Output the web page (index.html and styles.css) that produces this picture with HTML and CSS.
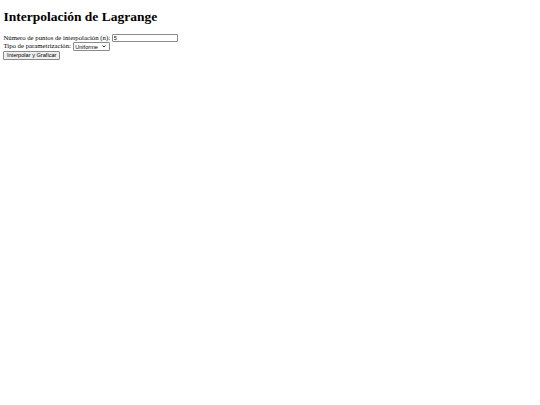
FILE: index.html
```html
<!DOCTYPE html>
<html lang="es">
<head>
<meta charset="utf-8">
<title>Interpolación de Lagrange</title>
<link rel="stylesheet" href="styles.css">
</head>
<body class="page">
<h1 class="title">Interpolación de Lagrange</h1>
<form class="form">
<label class="label" for="n">Número de puntos de interpolación (n):</label>
<input class="input" type="text" id="n" value="5">
<br>
<label class="label" for="tipo">Tipo de parametrización:</label>
<span class="select-wrap"><select class="select" id="tipo">
<option>Uniforme</option>
<option>Chebyshev</option>
</select><svg class="chevron" viewBox="0 0 8 5" width="4" height="2.5" aria-hidden="true"><path d="M1 1 L4 4 L7 1" fill="none" stroke="#000" stroke-width="1.6"/></svg></span>
<br>
<button class="button" type="button">Interpolar y Graficar</button>
</form>
</body>
</html>
```
FILE: styles.css
```css
html {
  background: #fff;
}
.page {
  margin: 3.4px;
  font-family: "Liberation Serif", "Times New Roman", serif;
  font-size: 6.75px;
  color: #000;
}
.title {
  font-size: 13.5px;
  font-weight: bold;
  margin: 5.6px 0 9px;
}
.form {
  margin: 0;
}
.input, .select, .button {
  font-family: "Liberation Sans", Arial, sans-serif;
  font-size: 5.625px;
  color: #000;
  margin: 0;
  vertical-align: baseline;
}
.input {
  box-sizing: border-box;
  width: 66px;
  height: 8.4px;
  padding: 0 1px;
  border: 1px solid #8a8a8a;
  border-radius: 1px;
  background: #fff;
}
.select-wrap {
  position: relative;
  display: inline-block;
}
.select {
  appearance: none;
  -webkit-appearance: none;
  box-sizing: border-box;
  width: 37px;
  height: 8.4px;
  padding: 0 0 0 1.5px;
  border: 1px solid #8a8a8a;
  border-radius: 1px;
  background: #fff;
}
.chevron {
  position: absolute;
  right: 3.5px;
  top: 3px;
  pointer-events: none;
}
.button {
  box-sizing: border-box;
  height: 8.8px;
  padding: 0 2.5px;
  margin-top: 0.3px;
  border: 1px solid #8a8a8a;
  border-radius: 1px;
  background: #efefef;
}
```
